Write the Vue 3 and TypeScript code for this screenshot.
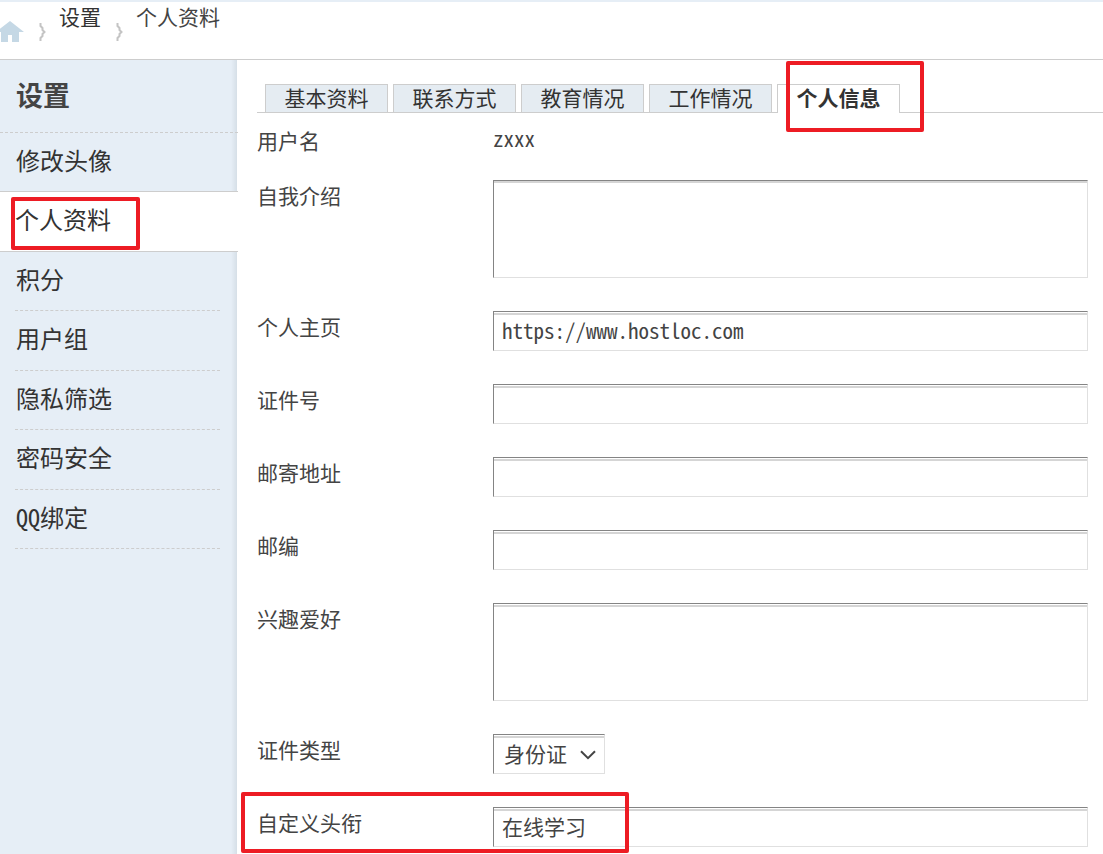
<script setup lang="ts">
import { ref } from 'vue'

interface Field {
  id: string
  label: string
  kind: 'text' | 'textarea' | 'select'
  value: string
  flush?: boolean
  marked?: boolean
}

const menu = ['修改头像', '个人资料', '积分', '用户组', '隐私筛选', '密码安全', 'QQ绑定']
const activeMenu = '个人资料'
const tabs = ['基本资料', '联系方式', '教育情况', '工作情况', '个人信息']
const activeTab = ref('个人信息')

const fields = ref<Field[]>([
  { id: 'bio', label: '自我介绍', kind: 'textarea', value: '', flush: true },
  { id: 'site', label: '个人主页', kind: 'text', value: 'https://www.hostloc.com' },
  { id: 'idcard', label: '证件号', kind: 'text', value: '' },
  { id: 'address', label: '邮寄地址', kind: 'text', value: '' },
  { id: 'zipcode', label: '邮编', kind: 'text', value: '' },
  { id: 'interest', label: '兴趣爱好', kind: 'textarea', value: '' },
  { id: 'idtype', label: '证件类型', kind: 'select', value: '身份证' },
  { id: 'title', label: '自定义头衔', kind: 'text', value: '在线学习', marked: true },
])
</script>

<template>
  <div class="page">
    <nav class="crumbs">
      <a href="#" class="home" aria-label="Home">
        <svg width="24" height="21" viewBox="0 0 24 21">
          <path d="M10 0 L24 11 H19 V21 H12 V14 H8 V21 H1 V11 H-4 Z" fill="#c5d8e5" />
        </svg>
      </a>
      <svg class="sep" width="8" height="20" viewBox="0 0 8 20">
        <path d="M1.5 1 V4 L3.5 6 V8 L5.5 10 L3.5 12 V14 L1.5 16 V19" />
      </svg>
      <a href="#" class="crumb first">设置</a>
      <svg class="sep" width="8" height="20" viewBox="0 0 8 20">
        <path d="M1.5 1 V4 L3.5 6 V8 L5.5 10 L3.5 12 V14 L1.5 16 V19" />
      </svg>
      <span class="crumb">个人资料</span>
    </nav>

    <div class="body">
      <aside class="side">
        <h2>设置</h2>
        <ul>
          <li v-for="item in menu" :key="item" :class="{ active: item === activeMenu }">
            <a href="#">{{ item }}</a>
            <span v-if="item === activeMenu" class="mark mark-menu"></span>
          </li>
        </ul>
      </aside>

      <main>
        <div class="tabs">
          <div v-for="tab in tabs" :key="tab" class="tab" :class="{ on: tab === activeTab }">
            <button type="button" @click="activeTab = tab">{{ tab }}</button>
            <span v-if="tab === activeTab" class="mark mark-tab"></span>
          </div>
        </div>

        <form @submit.prevent>
          <div class="row user">
            <span class="label">用户名</span>
            <span class="name">zxxx</span>
          </div>
          <div v-for="field in fields" :key="field.id" class="row">
            <label class="label" :for="field.id">{{ field.label }}</label>
            <textarea
              v-if="field.kind === 'textarea'"
              :id="field.id"
              v-model="field.value"
              class="control"
              :class="{ flush: field.flush }"
            ></textarea>
            <div v-else-if="field.kind === 'select'" class="pick">
              <select :id="field.id" v-model="field.value" class="control">
                <option>身份证</option>
              </select>
              <svg class="arrow" width="16" height="10" viewBox="0 0 16 10">
                <path d="M1 1.2 L8 8.2 L15 1.2" fill="none" stroke="#444" stroke-width="2" />
              </svg>
            </div>
            <input v-else :id="field.id" v-model="field.value" type="text" class="control" />
            <span v-if="field.marked" class="mark mark-row"></span>
          </div>
        </form>
      </main>
    </div>
  </div>
</template>

<style>
body {
  margin: 0;
  background: #fff;
}
</style>

<style scoped>
.page,
.page * {
  box-sizing: border-box;
}
.page {
  display: flex;
  flex-direction: column;
  min-height: 100vh;
  overflow: hidden;
  border-top: 2px solid #e6eef6;
  color: #444;
  font-family: 'Noto Sans Mono CJK SC', 'Noto Sans CJK SC', sans-serif;
  font-size: 21px;
  line-height: 28px;
}
a {
  color: #333;
  text-decoration: none;
}
.crumbs {
  display: flex;
  align-items: flex-start;
  height: 58px;
  border-bottom: 1px solid #cdcdcd;
}
.home {
  display: block;
  width: 24px;
  height: 21px;
  margin-top: 19px;
}
.home svg {
  display: block;
}
.sep {
  flex: none;
  margin: 20px 12px 0 15px;
  fill: none;
  stroke: #c4c4c4;
  stroke-width: 2;
}
.crumb.first {
  color: #333;
}
.body {
  display: flex;
  flex: 1;
}
.side {
  flex: none;
  width: 237px;
  background: linear-gradient(to left, #d6dfe7, #e6eef6 6px);
}
h2 {
  width: 238px;
  height: 73px;
  margin: 0;
  padding-left: 16px;
  border-bottom: 1px dashed #cdcdcd;
  font-size: 27px;
  font-weight: 700;
  line-height: 70px;
}
ul {
  margin: 0;
  padding: 0;
  list-style: none;
}
li {
  height: 59px;
  margin: 0 17px 0 15px;
  border-bottom: 1px dashed #cdcdcd;
  font-size: 24px;
  line-height: 54px;
}
li:nth-child(even) {
  height: 60px;
}
li:first-child,
li.active {
  width: 238px;
  margin: 0;
  padding-left: 15px;
  border-bottom: 1px solid #cdcdcd;
}
li:not(.active) a {
  padding-left: 1px;
}
li.active {
  position: relative;
  background: #fff;
}
main {
  flex: 1;
  min-width: 0;
  padding: 24px 0 6px 20px;
}
.tabs {
  display: flex;
  gap: 5px;
  height: 29px;
  padding-left: 8px;
  border-bottom: 1px solid #cdcdcd;
}
.tab {
  position: relative;
  width: 123px;
  height: 28px;
}
.tab button {
  display: block;
  width: 100%;
  height: 28px;
  padding: 0 0 4px;
  border: 1px solid #cdcdcd;
  border-bottom: 0;
  background: #e5ecf2;
  color: #333;
  font: inherit;
  line-height: 24px;
}
.tab.on button {
  height: 29px;
  padding-bottom: 5px;
  background: #fff;
  font-weight: 700;
}
form {
  display: grid;
  gap: 33px;
  padding: 12px 15px 0 0;
}
.row {
  position: relative;
  display: grid;
  grid-template-columns: 236px minmax(0, 1fr);
  align-items: start;
}
.row.user {
  height: 22px;
}
.label {
  line-height: 30px;
}
.name {
  line-height: 26px;
}
.control {
  display: block;
  width: 100%;
  height: 40px;
  margin: 0;
  padding: 0 8px 2px;
  border: 1px solid;
  border-color: #848484 #e0e0e0 #e0e0e0 #848484;
  border-radius: 0;
  outline: 0;
  background: #fff;
  box-shadow: inset 0 1px #fff, inset 0 3px #d5d5d5;
  color: #444;
  font: inherit;
}
textarea.control {
  height: 98px;
  resize: none;
}
.control.flush {
  box-shadow: inset 0 2px #d5d5d5;
}
.pick {
  position: relative;
  width: 112px;
}
select.control {
  padding-left: 10px;
  appearance: none;
}
.arrow {
  position: absolute;
  top: 16px;
  right: 9px;
  pointer-events: none;
}
.mark {
  position: absolute;
  z-index: 2;
  border: 4px solid #ed1c24;
  border-radius: 2px;
  pointer-events: none;
}
.mark-menu {
  top: 5px;
  left: 11px;
  width: 129px;
  height: 53px;
}
.mark-tab {
  top: -23px;
  left: 9px;
  width: 138px;
  height: 71px;
}
.mark-row {
  top: -15px;
  left: -16px;
  width: 388px;
  height: 61px;
}
</style>
